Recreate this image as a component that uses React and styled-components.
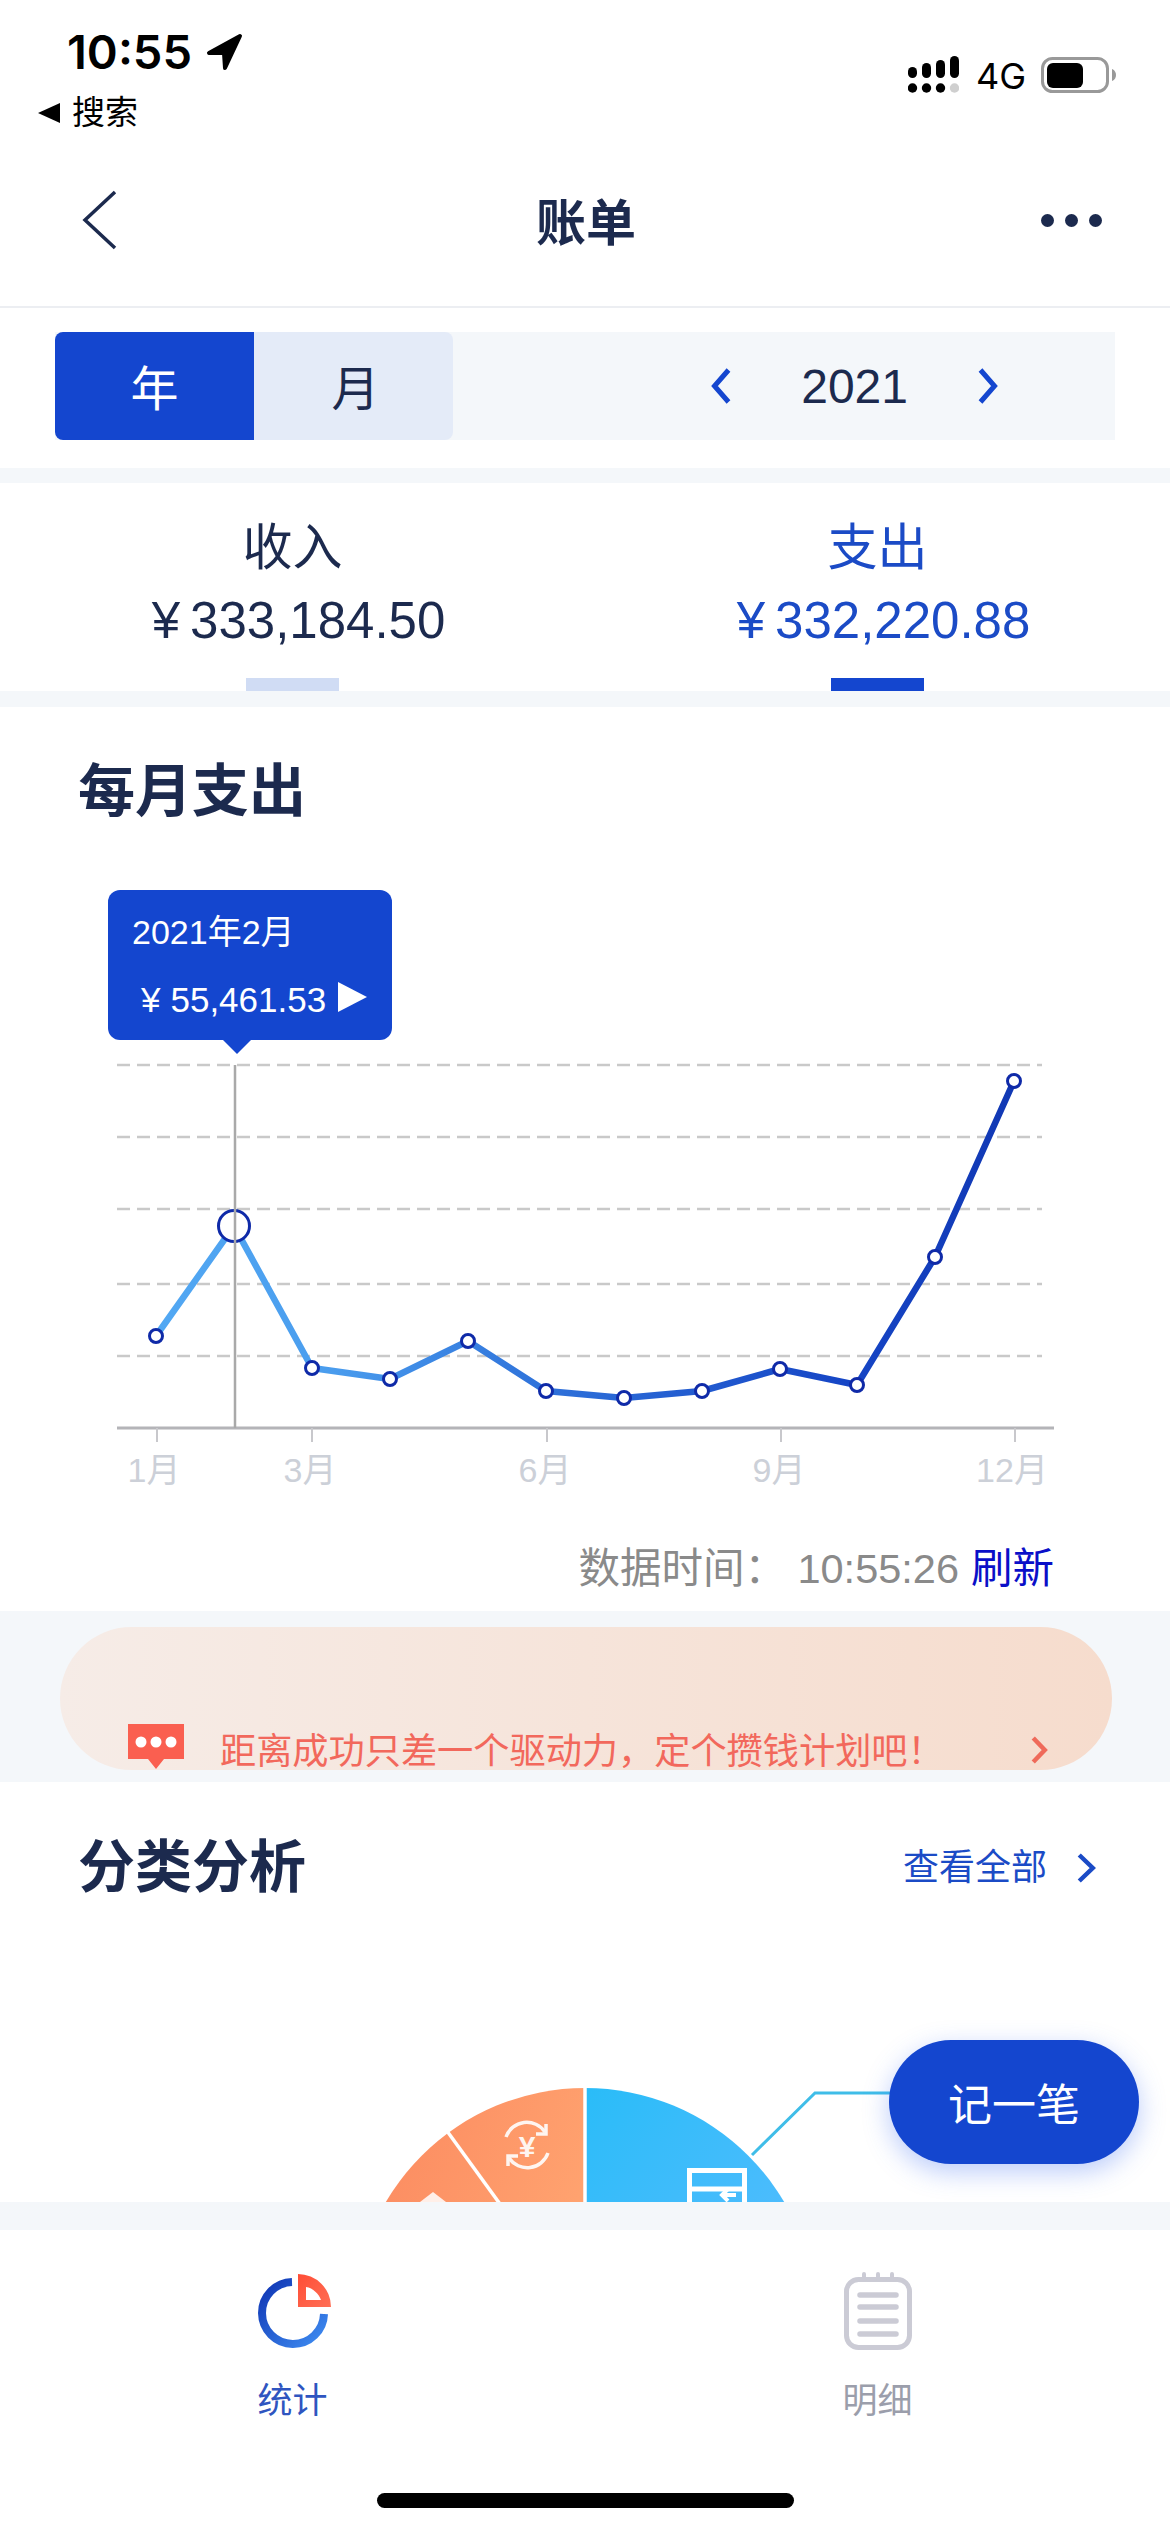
import React from 'react';
import styled, { createGlobalStyle } from 'styled-components';

const BLUE = '#1446cf';
const NAVY = '#1c2a4e';
const BAND = '#f4f7fa';
const FONT = '"Liberation Sans", "Noto Sans CJK SC", sans-serif';

const GlobalStyle = createGlobalStyle`
  html, body {
    margin: 0;
    padding: 0;
    background: #fff;
    font-family: ${FONT};
  }
`;

const Page = styled.div`
  position: relative;
  width: 1170px;
  height: 2532px;
  overflow: hidden;
  display: flex;
  flex-direction: column;
  background: #fff;
  color: ${NAVY};
`;

const StatusBar = styled.div`
  height: 150px;
  box-sizing: border-box;
  padding: 29px 53px 0 38px;
  display: flex;
  justify-content: space-between;
  color: #000;
`;

const StatusLeft = styled.div`
  display: flex;
  flex-direction: column;
`;

const TimeRow = styled.div`
  display: flex;
  align-items: center;
  gap: 13px;
  padding-left: 29px;
  font-family: Inter, ${FONT};
  font-size: 47px;
  font-weight: 600;
  line-height: 46px;
`;

const BackToSearch = styled.div`
  display: flex;
  align-items: center;
  gap: 12px;
  margin-top: 18px;
  font-size: 33px;
  line-height: 40px;
`;

const BackTriangle = styled.span`
  width: 0;
  height: 0;
  border-style: solid;
  border-width: 10px 22px 10px 0;
  border-color: transparent #000 transparent transparent;
`;

const StatusRight = styled.div`
  display: flex;
  align-items: center;
  height: 37px;
  margin-top: 27px;
  font-family: Inter, ${FONT};
  font-size: 36px;
`;

const FourG = styled.span`
  margin: 4px 15px 0 17px;
  line-height: 37px;
`;

const Nav = styled.div`
  height: 158px;
  box-sizing: border-box;
  padding: 0 68px 0 82px;
  border-bottom: 2px solid #eceef2;
  display: flex;
  align-items: center;
  justify-content: space-between;
`;

const BackIcon = styled.svg`
  margin-top: -16px;
`;

const NavTitle = styled.div`
  font-size: 50px;
  font-weight: 700;
  margin-left: 13px;
  margin-top: -18px;
`;

const Dots = styled.div`
  display: flex;
  gap: 11px;
  margin-top: -15px;
`;

const Dot = styled.span`
  width: 13px;
  height: 13px;
  border-radius: 50%;
  background: ${NAVY};
`;

const RangeSection = styled.div`
  padding: 24px 55px 28px;
`;

const RangeBar = styled.div`
  height: 108px;
  display: flex;
  align-items: stretch;
  background: ${BAND};
`;

const RangeTab = styled.div`
  width: 199px;
  box-sizing: border-box;
  padding-left: ${(p) => (p.$active ? 0 : 4)}px;
  padding-bottom: 2px;
  display: flex;
  align-items: center;
  justify-content: center;
  font-size: 48px;
  color: ${(p) => (p.$active ? '#fff' : NAVY)};
  background: ${(p) => (p.$active ? BLUE : '#e4ebf8')};
  border-radius: ${(p) => (p.$active ? '8px 0 0 8px' : '0 8px 8px 0')};
`;

const YearPicker = styled.div`
  margin-left: auto;
  padding-right: 117px;
  display: flex;
  align-items: center;
  gap: 69px;
  font-size: 48px;
`;

const Band = styled.div`
  height: ${(p) => p.$h}px;
  background: ${BAND};
  flex: none;
`;

const Summary = styled.div`
  height: 208px;
  display: flex;
`;

const SummaryItem = styled.div`
  flex: 1;
  display: flex;
  flex-direction: column;
  align-items: center;
  padding-top: 35px;
  color: ${(p) => (p.$active ? '#1b4bc6' : NAVY)};
`;

const SummaryLabel = styled.div`
  font-size: 50px;
  line-height: 60px;
`;

const SummaryAmount = styled.div`
  margin-top: 13px;
  padding-left: 12px;
  font-size: 51px;
  line-height: 60px;
`;

const Yen = styled.span`
  margin-right: 10px;
`;

const SummaryBar = styled.div`
  width: 93px;
  height: 13px;
  margin-top: auto;
  background: ${(p) => (p.$active ? BLUE : '#d0dcf4')};
`;

const MonthSection = styled.div`
  height: 904px;
  flex: none;
  display: flex;
  flex-direction: column;
`;

const SectionTitle = styled.h2`
  margin: 0;
  font-size: 57px;
  line-height: 64px;
  font-weight: 700;
  color: ${NAVY};
`;

const MonthHead = styled.div`
  padding: 52px 78px 0;
  height: 173px;
  box-sizing: border-box;
`;

const ChartWrap = styled.div`
  position: relative;
  height: 620px;
`;

const ChartSvg = styled.svg`
  display: block;
  font-family: ${FONT};
`;

const Tooltip = styled.div`
  position: absolute;
  left: 108px;
  top: 10px;
  width: 284px;
  height: 150px;
  box-sizing: border-box;
  padding: 20px 24px 0;
  border-radius: 12px;
  background: ${BLUE};
  color: #fff;
  font-size: 34px;
  line-height: 44px;

  &::after {
    content: '';
    position: absolute;
    left: 114px;
    bottom: -14px;
    border-style: solid;
    border-width: 15px 15px 0 15px;
    border-color: ${BLUE} transparent transparent transparent;
  }
`;

const TooltipAmount = styled.div`
  margin-top: 24px;
  padding-left: 9px;
  display: flex;
  align-items: center;
  font-size: 35px;
`;

const PlayMark = styled.span`
  margin: -6px 0 0 12px;
  border-style: solid;
  border-width: 15px 0 15px 29px;
  border-color: transparent transparent transparent #fff;
`;

const DataTime = styled.div`
  padding-right: 116px;
  margin-top: 44px;
  text-align: right;
  font-size: 41.5px;
  line-height: 50px;
  color: #8a8a8a;
`;

const Refresh = styled.span`
  margin-left: 12px;
  color: #0a0fc8;
`;

const TipWrap = styled.div`
  height: 171px;
  flex: none;
  box-sizing: border-box;
  padding: 16px 58px 12px 60px;
  background: ${BAND};
`;

const TipPill = styled.div`
  height: 143px;
  box-sizing: border-box;
  padding: 0 64px 0 68px;
  border-radius: 72px;
  background: linear-gradient(90deg, #f6ece7, #f6dccd);
  display: flex;
  align-items: flex-end;
  color: #f2685c;
  font-size: 36.2px;
`;

const TipText = styled.span`
  margin-left: 36px;
  line-height: 46px;
  margin-bottom: -5px;
  white-space: nowrap;
`;

const TipChevron = styled.span`
  margin-left: auto;
  display: flex;
  margin-bottom: 6px;
`;

const CategorySection = styled.div`
  height: 420px;
  flex: none;
  display: flex;
  flex-direction: column;
  justify-content: space-between;
`;

const CategoryHead = styled.div`
  padding: 53px 74px 0 78px;
  display: flex;
  justify-content: space-between;
  align-items: center;
`;

const SeeAll = styled.div`
  display: flex;
  align-items: center;
  gap: 29px;
  font-size: 36px;
  line-height: 44px;
  margin-top: 1px;
  color: #1b4bc6;
`;

const Fab = styled.div`
  position: absolute;
  left: 889px;
  top: 2040px;
  width: 250px;
  height: 124px;
  border-radius: 62px;
  background: ${BLUE};
  box-shadow: 0 8px 26px rgba(60, 110, 240, 0.35);
  color: #fff;
  font-size: 44px;
  display: flex;
  align-items: center;
  justify-content: center;
`;

const TabBar = styled.div`
  flex: 1;
  position: relative;
  display: flex;
`;

const TabItem = styled.div`
  flex: 1;
  display: flex;
  flex-direction: column;
  align-items: center;
  padding-top: 40px;
  font-size: 35px;
  line-height: 44px;
  color: ${(p) => (p.$active ? '#2f55c0' : '#9b9eab')};
`;

const TabLabel = styled.span`
  margin-top: 29px;
`;

const HomeBar = styled.div`
  position: absolute;
  left: 377px;
  top: 263px;
  width: 417px;
  height: 15px;
  border-radius: 8px;
  background: #000;
`;

// chart points, y relative to the top of ChartWrap (880)
const POINTS = [
  [156, 456], [234, 346], [312, 488], [390, 499], [468, 461], [546, 511],
  [624, 518], [702, 511], [780, 489], [857, 505], [935, 377], [1014, 201],
];
const GRID = [185, 257, 329, 404, 476];
const TICKS = [
  { x: 157, tx: 154, label: '1月' },
  { x: 312, tx: 310, label: '3月' },
  { x: 547, tx: 545, label: '6月' },
  { x: 781, tx: 779, label: '9月' },
  { x: 1015, tx: 1012, label: '12月' },
];

const Chevron = ({ dir = 'right', w = 20, h = 34, color = BLUE, sw = 5 }) => (
  <svg width={w} height={h} viewBox={`0 0 ${w} ${h}`} fill="none">
    <path
      d={
        dir === 'right'
          ? `M${sw / 2 + 1} 2 L${w - sw / 2 - 1} ${h / 2} L${sw / 2 + 1} ${h - 2}`
          : `M${w - sw / 2 - 1} 2 L${sw / 2 + 1} ${h / 2} L${w - sw / 2 - 1} ${h - 2}`
      }
      stroke={color}
      strokeWidth={sw}
    />
  </svg>
);

const SignalIcon = () => (
  <svg width="51" height="37" viewBox="0 0 51 37" fill="#000">
    <rect x="0" y="11" width="9" height="11" rx="4.5" />
    <rect x="14" y="7" width="9" height="15" rx="4.5" />
    <rect x="28" y="4" width="9" height="18" rx="4.5" />
    <rect x="42" y="0" width="9" height="22" rx="4.5" />
    <circle cx="4.5" cy="32" r="4.7" />
    <circle cx="18.5" cy="32" r="4.7" />
    <circle cx="32.5" cy="32" r="4.7" />
    <circle cx="46.5" cy="32" r="4.7" fill="#cfcfcf" />
  </svg>
);

const BatteryIcon = () => (
  <svg width="76" height="36" viewBox="0 0 76 36">
    <rect x="1.5" y="1.5" width="65" height="33" rx="10" fill="none" stroke="#999" strokeWidth="3" />
    <rect x="6" y="6" width="36" height="25" rx="6" fill="#000" />
    <path d="M71 12 C74 13 75 16 75 18 C75 20 74 23 71 24 Z" fill="#999" />
  </svg>
);

const LineChart = () => (
  <ChartSvg width="1170" height="620" viewBox="0 0 1170 620">
    <defs>
      <linearGradient id="lineGrad" gradientUnits="userSpaceOnUse" x1="156" y1="0" x2="1014" y2="0">
        <stop offset="0" stopColor="#52a8f3" />
        <stop offset="0.2" stopColor="#4a9dee" />
        <stop offset="0.45" stopColor="#2f72da" />
        <stop offset="0.8" stopColor="#1646c6" />
        <stop offset="1" stopColor="#1138b4" />
      </linearGradient>
    </defs>
    {GRID.map((y) => (
      <line key={y} x1="117" y1={y} x2="1042" y2={y} stroke="#c9c9c9" strokeWidth="2.5" strokeDasharray="13 7" />
    ))}
    <line x1="117" y1="548" x2="1054" y2="548" stroke="#b4b4b8" strokeWidth="3" />
    {TICKS.map((t) => (
      <g key={t.label}>
        <line x1={t.x} y1="548" x2={t.x} y2="562" stroke="#c8c8cc" strokeWidth="2" />
        <text x={t.tx} y="602" textAnchor="middle" fontSize="34" fill="#ccd0d8">{t.label}</text>
      </g>
    ))}
    <polyline
      points={POINTS.map((p) => p.join(',')).join(' ')}
      fill="none"
      stroke="url(#lineGrad)"
      strokeWidth="6.5"
      strokeLinejoin="round"
    />
    {POINTS.map(([x, y], i) => (
      <circle
        key={x}
        cx={x}
        cy={y}
        r={i === 1 ? 15.5 : 6.5}
        fill="#fff"
        stroke="#0f2aa8"
        strokeWidth="3"
      />
    ))}
    <line x1="235" y1="185" x2="235" y2="548" stroke="#a9a9a9" strokeWidth="2.5" />
  </ChartSvg>
);

const PieChart = () => (
  <ChartSvg width="1170" height="202" viewBox="0 0 1170 202">
    <defs>
      <linearGradient id="pieBlue" x1="0" y1="0" x2="1" y2="1">
        <stop offset="0" stopColor="#2abcf8" />
        <stop offset="1" stopColor="#5cbcff" />
      </linearGradient>
      <linearGradient id="pieOrange" x1="0" y1="0" x2="1" y2="0.4">
        <stop offset="0" stopColor="#fb875e" />
        <stop offset="1" stopColor="#ffa26f" />
      </linearGradient>
    </defs>
    <path d="M585 319 L585 88 A231 231 0 0 1 816 319 Z" fill="url(#pieBlue)" />
    <path d="M585 319 L585 88 A231 231 0 0 0 354 319 Z" fill="url(#pieOrange)" />
    <line x1="585" y1="86" x2="585" y2="202" stroke="#fff" strokeWidth="3.5" />
    <line x1="447" y1="131" x2="500" y2="204" stroke="#fff" strokeWidth="3.5" />
    <polyline points="752,155 815,93 890,93" fill="none" stroke="#3fbde8" strokeWidth="3" />
    {/* yen refresh icon */}
    <g fill="none" stroke="#fff" strokeWidth="3.5" opacity="0.9">
      <path d="M506 137 A22 22 0 0 1 545 132" />
      <path d="M548 153 A22 22 0 0 1 509 158" />
      <path d="M546 124 L546 134 L536 134" />
      <path d="M508 166 L508 156 L518 156" />
    </g>
    <text x="527" y="157" textAnchor="middle" fontSize="30" fontWeight="700" fill="#fff" opacity="0.9">¥</text>
    {/* document icon */}
    <g fill="none" stroke="#fff" strokeWidth="5">
      <path d="M689.5 204 L689.5 170.5 L744.5 170.5 L744.5 204" />
      <path d="M689.5 189 L744.5 189" />
    </g>
    <path d="M736 195 L722 195 M728 189 L722 195 L728 201" fill="none" stroke="#fff" strokeWidth="4" />
    {/* top of the third slice icon */}
    <path d="M420 202 L433 192 L446 202 Z" fill="#fff" opacity="0.85" />
  </ChartSvg>
);

const StatsIcon = () => (
  <svg width="80" height="80" viewBox="0 0 80 80" fill="none">
    <defs>
      <linearGradient id="ringGrad" x1="0" y1="0" x2="1" y2="1">
        <stop offset="0" stopColor="#0f35b4" />
        <stop offset="1" stopColor="#3f8df2" />
      </linearGradient>
      <linearGradient id="wedgeGrad" x1="0" y1="0" x2="1" y2="1">
        <stop offset="0" stopColor="#ff4d36" />
        <stop offset="1" stopColor="#ff6f55" />
      </linearGradient>
    </defs>
    <path d="M39 12 A31 31 0 1 0 71 44" stroke="url(#ringGrad)" strokeWidth="8" />
    <path
      fillRule="evenodd"
      d="M45 4 A33 33 0 0 1 78 37 L45 37 Z M53 17 L53 30 L68 30 C66 24 60 18 53 17 Z"
      fill="url(#wedgeGrad)"
    />
  </svg>
);

const NotesIcon = () => (
  <svg width="80" height="80" viewBox="0 0 80 80" fill="none" stroke="#cbcbd5">
    <rect x="8.5" y="9.5" width="63" height="68" rx="12" strokeWidth="5" />
    <path d="M26 4 V10 M40 4 V10 M54 4 V10" strokeWidth="4" strokeLinecap="round" />
    <path d="M22 25 H58 M22 37 H58 M22 51 H58 M22 64 H58" strokeWidth="5.5" strokeLinecap="round" />
  </svg>
);

const TipIcon = () => (
  <svg width="56" height="46" viewBox="0 0 56 46">
    <path d="M0 0 H56 V35 H36 L28 45 L20 35 H0 Z" fill="#fa5f50" />
    <circle cx="13" cy="18" r="5.5" fill="#fff" />
    <circle cx="28" cy="18" r="5.5" fill="#fff" />
    <circle cx="43" cy="18" r="5.5" fill="#fff" />
  </svg>
);

export default function App() {
  return (
    <Page>
      <GlobalStyle />
      <StatusBar>
        <StatusLeft>
          <TimeRow>
            10:55
            <svg width="38" height="38" viewBox="0 0 38 38">
              <path d="M35 3 L4 20 L19 20 L20 35 Z" fill="#000" stroke="#000" strokeWidth="4" strokeLinejoin="round" />
            </svg>
          </TimeRow>
          <BackToSearch>
            <BackTriangle />
            搜索
          </BackToSearch>
        </StatusLeft>
        <StatusRight>
          <SignalIcon />
          <FourG>4G</FourG>
          <BatteryIcon />
        </StatusRight>
      </StatusBar>

      <Nav>
        <BackIcon width="36" height="60" viewBox="0 0 36 60" fill="none">
          <path d="M33 2 L3 30 L33 58" stroke={NAVY} strokeWidth="3.5" />
        </BackIcon>
        <NavTitle>账单</NavTitle>
        <Dots>
          <Dot />
          <Dot />
          <Dot />
        </Dots>
      </Nav>

      <RangeSection>
        <RangeBar>
          <RangeTab $active>年</RangeTab>
          <RangeTab>月</RangeTab>
          <YearPicker>
            <Chevron dir="left" w={21} h={36} />
            2021
            <Chevron w={21} h={36} />
          </YearPicker>
        </RangeBar>
      </RangeSection>

      <Band $h={15} />

      <Summary>
        <SummaryItem>
          <SummaryLabel>收入</SummaryLabel>
          <SummaryAmount><Yen>¥</Yen>333,184.50</SummaryAmount>
          <SummaryBar />
        </SummaryItem>
        <SummaryItem $active>
          <SummaryLabel>支出</SummaryLabel>
          <SummaryAmount><Yen>¥</Yen>332,220.88</SummaryAmount>
          <SummaryBar $active />
        </SummaryItem>
      </Summary>

      <Band $h={16} />

      <MonthSection>
        <MonthHead>
          <SectionTitle>每月支出</SectionTitle>
        </MonthHead>
        <ChartWrap>
          <LineChart />
          <Tooltip>
            2021年2月
            <TooltipAmount>
              <Yen>¥</Yen>55,461.53
              <PlayMark />
            </TooltipAmount>
          </Tooltip>
        </ChartWrap>
        <DataTime>
          数据时间： 10:55:26<Refresh>刷新</Refresh>
        </DataTime>
      </MonthSection>

      <TipWrap>
        <TipPill>
          <TipIcon />
          <TipText>距离成功只差一个驱动力，定个攒钱计划吧！</TipText>
          <TipChevron>
            <Chevron w={18} h={28} color="#ef6a5a" sw={4.5} />
          </TipChevron>
        </TipPill>
      </TipWrap>

      <CategorySection>
        <CategoryHead>
          <SectionTitle>分类分析</SectionTitle>
          <SeeAll>
            查看全部
            <Chevron w={20} h={30} color="#1b4bc6" sw={4.5} />
          </SeeAll>
        </CategoryHead>
        <PieChart />
      </CategorySection>

      <Band $h={28} />

      <TabBar>
        <TabItem $active>
          <StatsIcon />
          <TabLabel>统计</TabLabel>
        </TabItem>
        <TabItem>
          <NotesIcon />
          <TabLabel>明细</TabLabel>
        </TabItem>
        <HomeBar />
      </TabBar>

      <Fab>记一笔</Fab>
    </Page>
  );
}
